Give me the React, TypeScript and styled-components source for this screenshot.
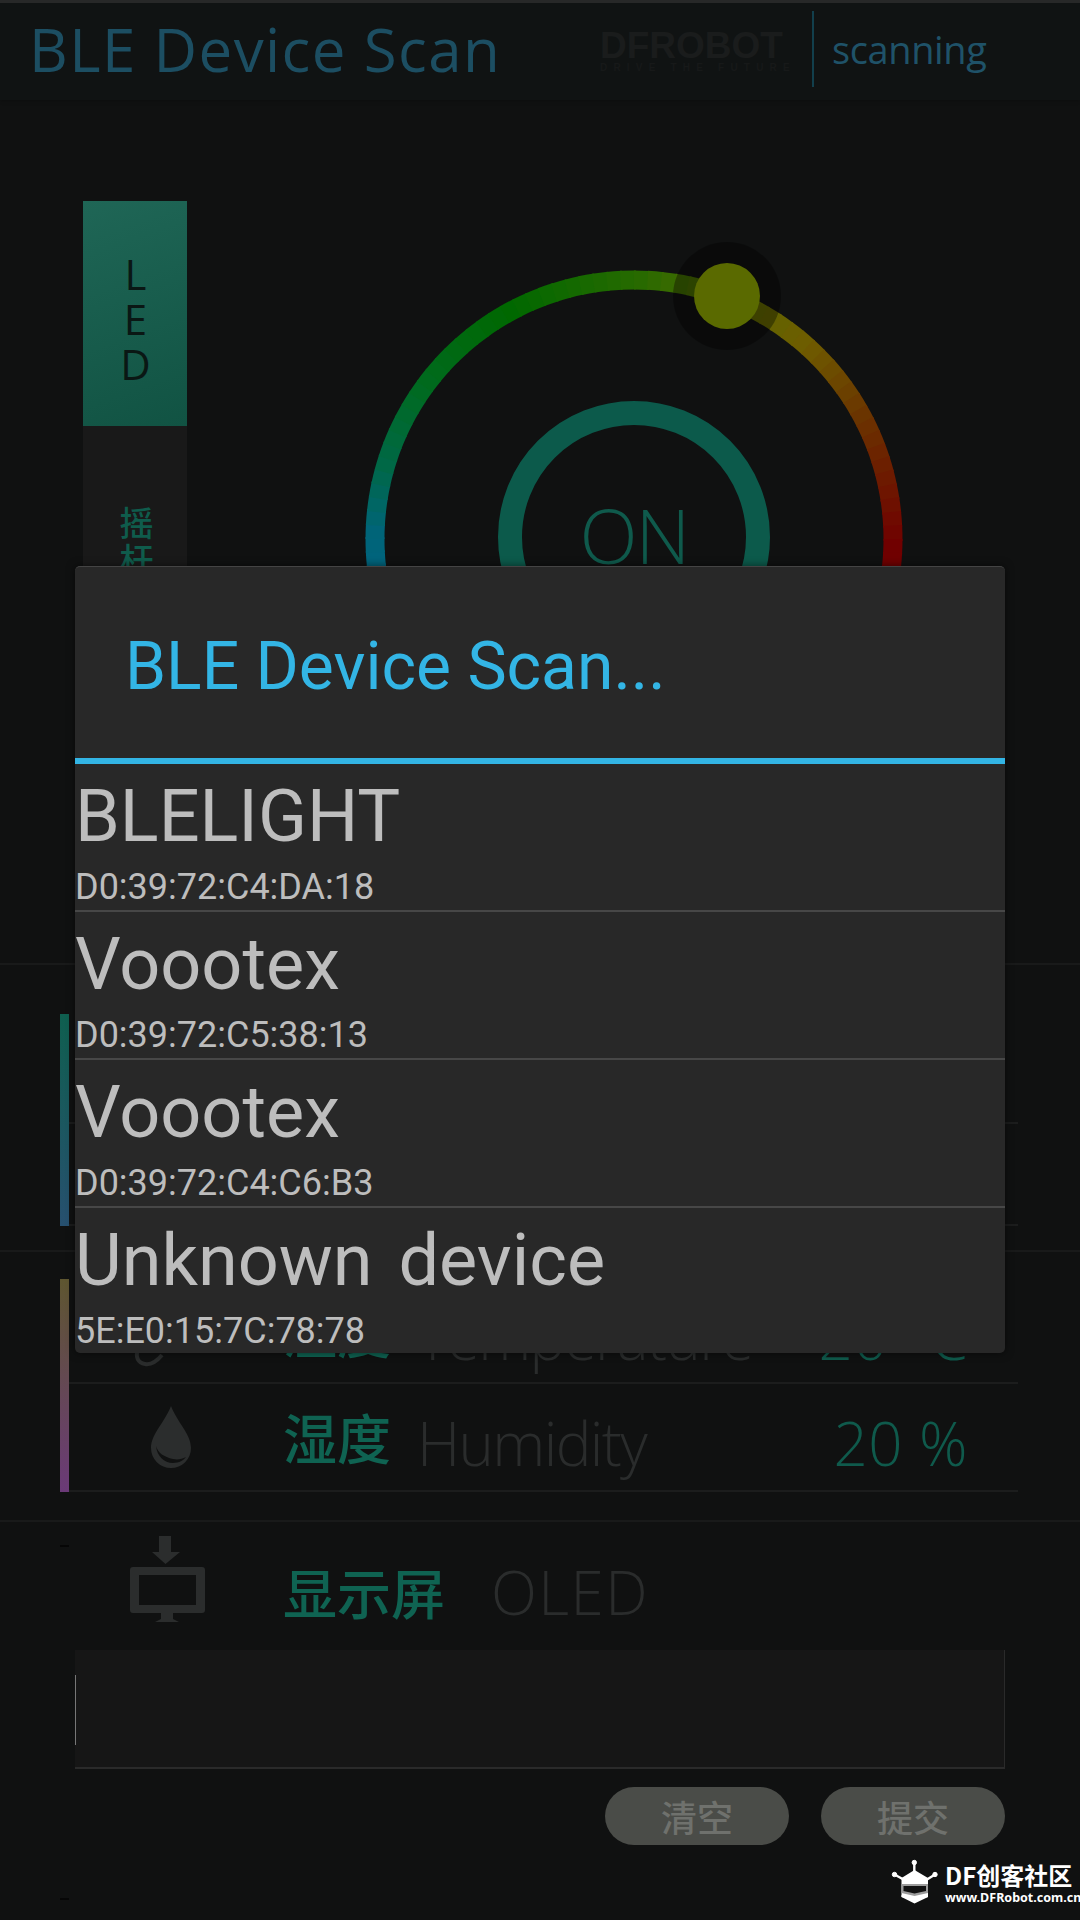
import styled, { createGlobalStyle } from "styled-components";

const GlobalStyle = createGlobalStyle`
  html, body {
    margin: 0;
    padding: 0;
    background: #101111;
  }
  * {
    box-sizing: border-box;
  }
`;

const Page = styled.div`
  position: relative;
  width: 1080px;
  height: 1920px;
  overflow: hidden;
  background: #101111;
  font-family: "Open Sans", "Noto Sans CJK SC", sans-serif;
`;

const Header = styled.header`
  height: 100px;
  display: flex;
  align-items: center;
  border-top: 3px solid #272828;
  background: #101313;
  box-shadow: 0 1px 4px rgba(0, 0, 0, 0.25);
  padding: 0 0 6px 29px;
`;

const AppTitle = styled.div`
  width: 571px;
  font-size: 60px;
  font-weight: 400;
  letter-spacing: 1.4px;
  color: #1c4e62;
  white-space: nowrap;
`;

const Brand = styled.div`
  width: 212px;
  display: flex;
  flex-direction: column;
  color: #1a1c1c;
  font-family: "Liberation Sans", sans-serif;
  font-weight: 700;
`;

const BrandName = styled.div`
  font-size: 37px;
  line-height: 30px;
  margin-top: 8px;
`;

const BrandLine = styled.div`
  font-size: 10px;
  line-height: 12px;
  margin-top: 1px;
  letter-spacing: 6.2px;
  white-space: nowrap;
  color: #171919;
`;

const HeaderRule = styled.div`
  width: 2px;
  height: 76px;
  background: #123f4c;
`;

const Status = styled.div`
  margin-left: 18px;
  font-size: 38px;
  font-weight: 400;
  letter-spacing: -0.4px;
  color: #1f5268;
`;

const TopSection = styled.section`
  height: 865px;
  display: flex;
  align-items: flex-start;
  padding: 101px 0 0 83px;
  border-bottom: 2px solid #191a1a;
`;

const Tabs = styled.div`
  width: 104px;
  display: flex;
  flex-direction: column;
`;

const Tab = styled.div<{ $active?: boolean }>`
  height: 225px;
  display: flex;
  justify-content: center;
  padding-top: ${(p) => (p.$active ? "44px" : "80px")};
  background: ${(p) => (p.$active ? "linear-gradient(160deg, #1f6656, #115343)" : "#191919")};
`;

const TabLabel = styled.span<{ $active?: boolean }>`
  writing-mode: vertical-rl;
  text-orientation: upright;
  line-height: 1;
  color: ${(p) => (p.$active ? "#0a1714" : "#0f5c4c")};
  font-size: ${(p) => (p.$active ? "42px" : "34px")};
  font-weight: ${(p) => (p.$active ? 400 : 500)};
  letter-spacing: ${(p) => (p.$active ? "-12px" : "3px")};
`;

const GaugeBox = styled.div`
  margin: 39px 0 0 147px;
  width: 600px;
  height: 600px;
`;

const OnText = styled.text`
  font-family: "Open Sans", sans-serif;
  font-size: 76px;
  font-weight: 300;
  letter-spacing: -2px;
  fill: #0f5a4c;
`;

const SensorSection = styled.section<{ $height: number; $top: number }>`
  height: ${(p) => p.$height}px;
  padding: ${(p) => p.$top}px 62px 0 60px;
  border-bottom: 2px solid #191a1a;
`;

const SensorBlock = styled.div`
  display: flex;
`;

const Stripe = styled.div<{ $from: string; $to: string }>`
  width: 9px;
  background: linear-gradient(${(p) => p.$from}, ${(p) => p.$to});
`;

const Rows = styled.div`
  flex: 1;
  display: flex;
  flex-direction: column;
`;

const SensorRow = styled.div<{ $height: number }>`
  height: ${(p) => p.$height}px;
  display: flex;
  align-items: center;
  padding-right: 50px;
  border-bottom: 2px solid #1c1d1d;
`;

const IconSlot = styled.div<{ $left: number; $width: number }>`
  width: ${(p) => p.$width}px;
  padding-left: ${(p) => p.$left}px;
  display: flex;
  align-items: center;
`;

const ZhLabel = styled.span`
  font-family: "Noto Sans CJK SC", sans-serif;
  font-size: 54px;
  font-weight: 500;
  line-height: 1;
  color: #0f6352;
`;

const EnLabel = styled.span<{ $gap: number; $spacing: number; $drop?: number }>`
  margin-left: ${(p) => p.$gap}px;
  margin-top: ${(p) => p.$drop ?? 0}px;
  font-size: 60px;
  font-weight: 300;
  letter-spacing: ${(p) => p.$spacing}px;
  color: #2a2c2c;
`;

const ReadOut = styled.span`
  margin-left: auto;
  margin-top: 12px;
  font-size: 60px;
  font-weight: 300;
  letter-spacing: 0.5px;
  color: #0f5a4c;
`;

const OledSection = styled.section`
  position: relative;
  display: flex;
  flex-direction: column;
  &::before {
    content: "";
    position: absolute;
    left: 60px;
    top: 23px;
    width: 9px;
    height: 351px;
    border-top: 2px solid #060606;
    border-bottom: 2px solid #060606;
  }
`;

const OledHeader = styled.div`
  height: 128px;
  display: flex;
  align-items: center;
  padding: 12px 0 0 130px;
`;

const OledIcon = styled.div`
  width: 153px;
  display: flex;
  margin-top: -24px;
`;

const TextBox = styled.div`
  position: relative;
  width: 930px;
  height: 119px;
  margin-left: 75px;
  background: #161616;
  border-right: 1px solid #2a2a2a;
  border-bottom: 2px solid #2a2a2a;
  &::before {
    content: "";
    position: absolute;
    left: 0;
    top: 25px;
    width: 1px;
    height: 70px;
    background: #777;
  }
`;

const ButtonRow = styled.div`
  display: flex;
  justify-content: flex-end;
  gap: 32px;
  margin-top: 18px;
  padding-right: 75px;
`;

const PillButton = styled.div`
  width: 184px;
  height: 58px;
  border-radius: 29px;
  display: flex;
  align-items: center;
  justify-content: center;
  background: #4a4c48;
  color: #6f716d;
  font-family: "Noto Sans CJK SC", sans-serif;
  font-size: 36px;
  font-weight: 500;
  line-height: 1;
`;

const Dialog = styled.div`
  position: absolute;
  left: 75px;
  top: 566px;
  width: 930px;
  height: 787px;
  background: #282828;
  border-radius: 5px;
  border-top: 1px solid #444;
  box-shadow: 0 0 8px rgba(0, 0, 0, 0.55);
  overflow: hidden;
`;

const DialogHead = styled.div`
  height: 197px;
  display: flex;
  align-items: center;
  padding: 7px 0 0 50px;
  border-bottom: 6px solid #33b5e5;
`;

const DialogTitle = styled.div`
  font-family: Roboto, sans-serif;
  font-size: 66px;
  color: #33b5e5;
`;

const DeviceRow = styled.div`
  height: 148px;
  padding-top: 11px;
  border-bottom: 2px solid #474747;
  color: #bdbdbd;
  font-family: Roboto, sans-serif;
  &:last-child {
    border-bottom: 0;
  }
`;

const DeviceName = styled.div`
  font-size: 72px;
  line-height: 84px;
  word-spacing: 8px;
`;

const DeviceAddress = styled.div`
  margin-top: 6px;
  font-size: 36px;
  line-height: 44px;
`;

const Watermark = styled.div`
  position: absolute;
  left: 885px;
  top: 1855px;
  display: flex;
  color: #fff;
`;

const MarkText = styled.div`
  display: flex;
  flex-direction: column;
  padding-top: 5px;
`;

const MarkName = styled.div`
  font-family: "Noto Sans CJK SC", sans-serif;
  font-size: 24px;
  font-weight: 700;
  line-height: 30px;
  white-space: nowrap;
`;

const MarkUrl = styled.div`
  font-family: "Noto Sans", sans-serif;
  font-size: 12.5px;
  font-weight: 700;
  line-height: 16px;
  white-space: nowrap;
`;

const devices = [
  { name: "BLELIGHT", address: "D0:39:72:C4:DA:18" },
  { name: "Voootex", address: "D0:39:72:C5:38:13" },
  { name: "Voootex", address: "D0:39:72:C4:C6:B3" },
  { name: "Unknown device", address: "5E:E0:15:7C:78:78" },
];

// colour of the ring by angle, 0 = left horizon, 180 = right horizon
const ringStops: [number, number[]][] = [
  [-15, [0, 100, 130]],
  [0, [0, 100, 120]],
  [15, [0, 104, 70]],
  [35, [0, 106, 30]],
  [60, [0, 104, 0]],
  [90, [40, 106, 0]],
  [110, [88, 106, 0]],
  [130, [110, 92, 0]],
  [150, [106, 52, 0]],
  [180, [112, 0, 0]],
  [195, [112, 0, 0]],
];

const ringColor = (deg: number) => {
  for (let i = 1; i < ringStops.length; i++) {
    const [a, ca] = ringStops[i - 1];
    const [b, cb] = ringStops[i];
    if (deg <= b) {
      const t = (deg - a) / (b - a);
      const c = ca.map((v, k) => Math.round(v + (cb[k] - v) * t));
      return `rgb(${c.join(",")})`;
    }
  }
  return "rgb(112,0,0)";
};

const Gauge = () => {
  const cx = 300;
  const cy = 299;
  const r = 259;
  const pt = (deg: number) => {
    const a = ((180 + deg) * Math.PI) / 180;
    return `${(cx + r * Math.cos(a)).toFixed(2)} ${(cy + r * Math.sin(a)).toFixed(2)}`;
  };
  const segments = [];
  for (let d = -15; d < 195; d += 3) {
    segments.push(
      <path
        key={d}
        d={`M${pt(d)} A${r} ${r} 0 0 1 ${pt(d + 3.4)}`}
        fill="none"
        stroke={ringColor(d)}
        strokeWidth={19}
      />
    );
  }
  return (
    <svg width="600" height="600" viewBox="0 0 600 600">
      {segments}
      <circle cx="393" cy="56" r="54" fill="#000" opacity="0.36" />
      <circle cx="393" cy="56" r="33" fill="#5a6a00" />
      <circle cx={cx} cy="297" r="124" fill="none" stroke="#0c5a4b" strokeWidth="24" />
      <OnText x={cx} y="324" textAnchor="middle">
        ON
      </OnText>
    </svg>
  );
};

const ThermoIcon = () => (
  <svg width="50" height="100" viewBox="0 0 50 100">
    <path d="M4 68c-3 8 0 14 7 15 6 1 12-3 17-9" fill="none" stroke="#2a2c2c" strokeWidth="4" />
  </svg>
);

const DropIcon = () => (
  <svg width="42" height="64" viewBox="0 0 42 64">
    <path d="M21 1C15 17 1 29 1 43a20 20 0 0 0 40 0C41 29 27 17 21 1Z" fill="#2b2d2d" />
    <path d="M6 41c1 10 8 17 17 17 6 0 11-3 13-6-4 2-8 3-13 2C14 52 8 48 6 41Z" fill="#101111" />
  </svg>
);

const ScreenIcon = () => (
  <svg width="76" height="90" viewBox="0 0 76 90">
    <path d="M29 1h12v16h9L35.5 29 22 17h7Z" fill="#2b2d2d" />
    <path
      fillRule="evenodd"
      d="M3 32h69a3 3 0 0 1 3 3v40a3 3 0 0 1-3 3H3a3 3 0 0 1-3-3V35a3 3 0 0 1 3-3Zm6 8v30h57V40Z"
      fill="#2b2d2d"
    />
    <path d="M31 78h12v6l6 3H25l6-3Z" fill="#2b2d2d" />
  </svg>
);

const RobotMark = () => (
  <svg width="60" height="55" viewBox="0 0 60 55">
    <g fill="#fff" stroke="#fff">
      <path d="M29.3 7v10M9.5 19.5l9 5M50 19.5l-8 5" strokeWidth="2.4" />
      <circle cx="29.3" cy="7.5" r="2.2" />
      <circle cx="9.5" cy="19.5" r="2.2" />
      <circle cx="50" cy="19.5" r="2.2" />
    </g>
    <path d="M29.5 15 43 23v19l-13.5 6.5L16.5 42V23Z" fill="#fff" />
    <path d="M16.5 29h26.5v9l-13.5 3-13-3Z" fill="#9c9c9c" />
    <path d="M18.5 31h22.5v5l-11.5 2.6L18.5 36Z" fill="#111" />
    <path d="M16.5 40l13 3 13.5-3v2l-13.5 3-13-3Z" fill="#fff" />
  </svg>
);

const App = () => {
  return (
    <Page>
      <GlobalStyle />
      <Header>
        <AppTitle>BLE Device Scan</AppTitle>
        <Brand>
          <BrandName>DFROBOT</BrandName>
          <BrandLine>DRIVE THE FUTURE</BrandLine>
        </Brand>
        <HeaderRule />
        <Status>scanning</Status>
      </Header>

      <TopSection>
        <Tabs>
          <Tab $active>
            <TabLabel $active>LED</TabLabel>
          </Tab>
          <Tab>
            <TabLabel>摇杆</TabLabel>
          </Tab>
        </Tabs>
        <GaugeBox>
          <Gauge />
        </GaugeBox>
      </TopSection>

      <SensorSection $height={287} $top={49}>
        <SensorBlock>
          <Stripe $from="#0f5f4f" $to="#27506f" />
          <Rows>
            <SensorRow $height={110} />
            <SensorRow $height={102} />
          </Rows>
        </SensorBlock>
      </SensorSection>

      <SensorSection $height={270} $top={27}>
        <SensorBlock>
          <Stripe $from="#5e5630" $to="#6b3a78" />
          <Rows>
            <SensorRow $height={105}>
              <IconSlot $left={65} $width={214}>
                <ThermoIcon />
              </IconSlot>
              <ZhLabel>温度</ZhLabel>
              <EnLabel $gap={26} $spacing={-1.6} $drop={12}>
                Temperature
              </EnLabel>
              <ReadOut>20 °C</ReadOut>
            </SensorRow>
            <SensorRow $height={108}>
              <IconSlot $left={81} $width={214}>
                <DropIcon />
              </IconSlot>
              <ZhLabel>湿度</ZhLabel>
              <EnLabel $gap={26} $spacing={-1.6} $drop={12}>
                Humidity
              </EnLabel>
              <ReadOut>20 %</ReadOut>
            </SensorRow>
          </Rows>
        </SensorBlock>
      </SensorSection>

      <OledSection>
        <OledHeader>
          <OledIcon>
            <ScreenIcon />
          </OledIcon>
          <ZhLabel>显示屏</ZhLabel>
          <EnLabel $gap={46} $spacing={1.5}>
            OLED
          </EnLabel>
        </OledHeader>
        <TextBox />
        <ButtonRow>
          <PillButton>清空</PillButton>
          <PillButton>提交</PillButton>
        </ButtonRow>
      </OledSection>

      <Dialog>
        <DialogHead>
          <DialogTitle>BLE Device Scan...</DialogTitle>
        </DialogHead>
        {devices.map((d) => (
          <DeviceRow key={d.address}>
            <DeviceName>{d.name}</DeviceName>
            <DeviceAddress>{d.address}</DeviceAddress>
          </DeviceRow>
        ))}
      </Dialog>

      <Watermark>
        <RobotMark />
        <MarkText>
          <MarkName>DF创客社区</MarkName>
          <MarkUrl>www.DFRobot.com.cn</MarkUrl>
        </MarkText>
      </Watermark>
    </Page>
  );
};

export default App;
